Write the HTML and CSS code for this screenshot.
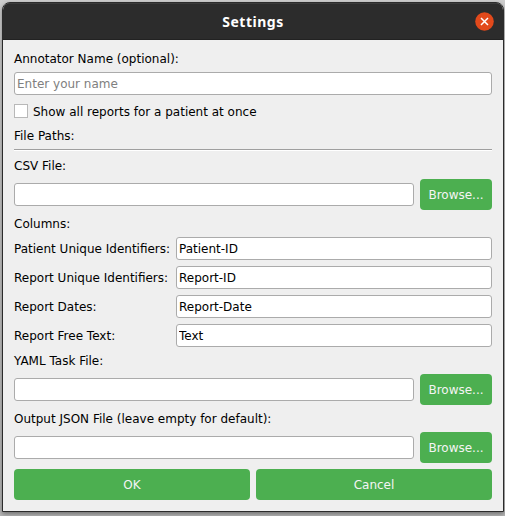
FILE: index.html
```html
<!DOCTYPE html>
<html lang="en">
<head>
<meta charset="utf-8">
<title>Settings</title>
<link rel="stylesheet" href="styles.css">
</head>
<body>
<div class="window">
  <header class="titlebar">
    <h1 class="title">Settings</h1>
    <button class="close" aria-label="Close">
      <svg width="19" height="19" viewBox="0 0 19 19"><circle cx="9.5" cy="9.5" r="9.3" fill="#e2491b"/><path d="M6 6l7 7M13 6l-7 7" stroke="#fff" stroke-width="1.5"/></svg>
    </button>
  </header>
  <form class="form">
    <label class="label" for="name">Annotator Name (optional):</label>
    <input class="field" id="name" type="text" placeholder="Enter your name">
    <label class="check"><input class="box" type="checkbox">Show all reports for a patient at once</label>
    <div class="label">File Paths:</div>
    <div class="rule"></div>
    <label class="label" for="csv">CSV File:</label>
    <div class="file-row"><input class="field" id="csv" type="text"><button class="button" type="button">Browse...</button></div>
    <div class="label">Columns:</div>
    <div class="columns">
      <label class="label" for="pid">Patient Unique Identifiers:</label><input class="field" id="pid" type="text" value="Patient-ID">
      <label class="label" for="rid">Report Unique Identifiers:</label><input class="field" id="rid" type="text" value="Report-ID">
      <label class="label" for="date">Report Dates:</label><input class="field" id="date" type="text" value="Report-Date">
      <label class="label" for="text">Report Free Text:</label><input class="field" id="text" type="text" value="Text">
    </div>
    <label class="label" for="yaml">YAML Task File:</label>
    <div class="file-row"><input class="field" id="yaml" type="text"><button class="button" type="button">Browse...</button></div>
    <label class="label" for="json">Output JSON File (leave empty for default):</label>
    <div class="file-row"><input class="field" id="json" type="text"><button class="button" type="button">Browse...</button></div>
    <div class="actions"><button class="button" type="button">OK</button><button class="button" type="button">Cancel</button></div>
  </form>
</div>
</body>
</html>
```
FILE: styles.css
```css
* { box-sizing: border-box; }
body {
  margin: 0;
  padding: 2px 1px 4px 2px;
  height: 516px;
  overflow: hidden;
  background: linear-gradient(#cfcfcf, #b8b8b8);
  font: 12px/15px "DejaVu Sans", sans-serif;
  color: #000;
}
.window {
  height: 510px;
  border: 1px solid #2b2b2b;
  border-radius: 8px 8px 0 0;
  background: #efefef;
  overflow: hidden;
  box-shadow: 0 2px 5px rgba(0, 0, 0, .4);
}
.titlebar {
  display: grid;
  grid-template-columns: 1fr auto 1fr;
  align-items: center;
  height: 37px;
  background: #2c2c2c;
  border-bottom: 1px solid #222;
  box-shadow: inset 0 1px #3b3b3b;
}
.title {
  grid-column: 2;
  margin: 0;
  padding-top: 2px;
  font: bold 14px/20px "Noto Sans", sans-serif;
  letter-spacing: .5px;
  color: #fff;
}
.close {
  justify-self: end;
  display: flex;
  margin-right: 9px;
  padding: 0;
  border: 0;
  background: none;
}
.form {
  display: flex;
  flex-direction: column;
  gap: 6px;
  padding: 11px;
}
.label { height: 15px; line-height: 17px; white-space: nowrap; }
.field {
  width: 100%;
  min-width: 0;
  height: 23px;
  padding: 0 2px;
  border: 1px solid #ababab;
  border-radius: 3px;
  background: #fff;
  font: inherit;
  color: #000;
}
.field::placeholder { color: #808080; opacity: 1; }
.check {
  display: flex;
  align-items: flex-start;
  gap: 5px;
  height: 21px;
  padding-top: 3px;
  line-height: 17px;
}
.box {
  appearance: none;
  width: 14px;
  height: 14px;
  margin: 0;
  border: 1px solid #b8b8b8;
  background: #fff;
}
.rule {
  height: 3px;
  border-top: 1px solid #9f9f9f;
  background: linear-gradient(#fff 1px, transparent 1px);
}
.file-row {
  display: grid;
  grid-template-columns: 1fr 72px;
  align-items: center;
  gap: 6px;
}
.button {
  height: 31px;
  padding: 1px 0 0;
  border: 0;
  border-radius: 4px;
  background: #4caf50;
  font: inherit;
  color: #f4f4f4;
}
.columns {
  display: grid;
  grid-template-columns: 156px 1fr;
  align-items: center;
  gap: 6px;
}
.actions {
  display: grid;
  grid-template-columns: 1fr 1fr;
  gap: 6px;
}
```
